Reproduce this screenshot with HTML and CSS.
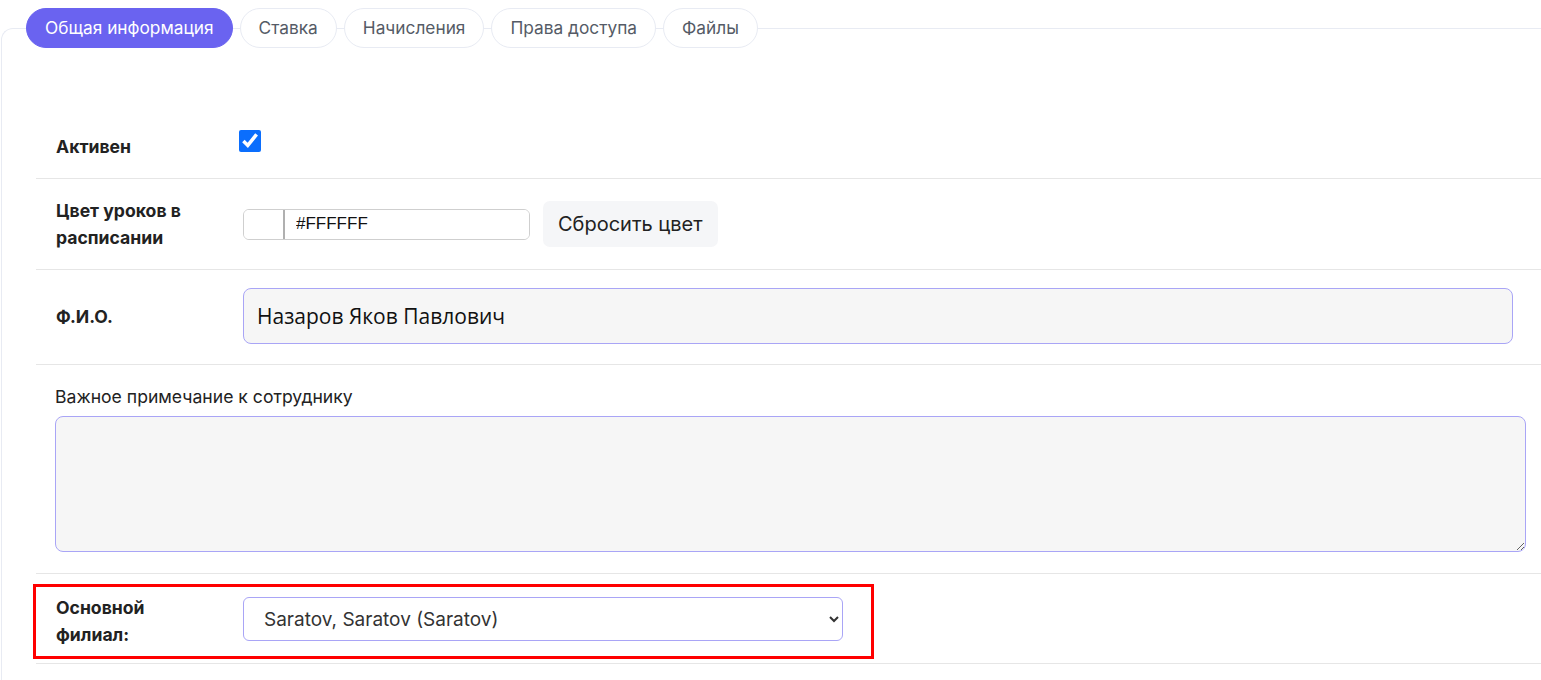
FILE: index.html
```html
<!DOCTYPE html>
<html lang="ru">
<head>
    <meta charset="UTF-8">
    <meta name="viewport" content="width=device-width, initial-scale=1.0">
    <title>Сотрудник - Общая информация</title>
    <link rel="stylesheet" href="styles.css">
</head>
<body>
    <div class="page">
        <div class="tabs">
            <a class="tab active" href="#">Общая информация</a>
            <a class="tab" href="#">Ставка</a>
            <a class="tab" href="#">Начисления</a>
            <a class="tab" href="#">Права доступа</a>
            <a class="tab" href="#">Файлы</a>
        </div>

        <div class="card">
            <div class="row row-active">
                <label class="label" for="active">Активен</label>
                <input type="checkbox" id="active" class="check" checked>
            </div>

            <div class="row row-color">
                <label class="label" for="color">Цвет уроков в расписании</label>
                <div class="color-group">
                    <span class="swatch"></span>
                    <input type="text" id="color" class="color-text" value="#FFFFFF">
                </div>
                <button class="btn-reset">Сбросить цвет</button>
            </div>

            <div class="row row-name">
                <label class="label" for="fio">Ф.И.О.</label>
                <input type="text" id="fio" class="field" value="Назаров Яков Павлович">
            </div>

            <div class="row row-note">
                <label class="note-label" for="note">Важное примечание к сотруднику</label>
                <textarea id="note" class="note"></textarea>
            </div>

            <div class="row row-branch">
                <div class="highlight">
                    <label class="label" for="branch">Основной филиал:</label>
                    <select id="branch" class="select">
                        <option>Saratov, Saratov (Saratov)</option>
                    </select>
                </div>
            </div>
        </div>
    </div>
</body>
</html>
```

FILE: styles.css
```css
body {
    font-family: Inter, "Noto Sans", sans-serif;
    background-color: #fff;
    color: #222;
    margin: 0;
    padding: 0;
    overflow: hidden;
}

.page {
    width: 1580px;
    padding-left: 1px;
}

.tabs {
    display: flex;
    gap: 7px;
    padding: 8px 0 0 25px;
    position: relative;
    z-index: 1;
}

.tab {
    display: block;
    height: 38px;
    line-height: 38px;
    padding: 0 18px;
    border: 1px solid #e8ebf3;
    border-radius: 20px;
    background-color: #fff;
    color: #555b66;
    font-size: 17.3px;
    text-decoration: none;
}

.tab.active {
    background-color: #6a63f0;
    border-color: #6a63f0;
    color: #fff;
}

.card {
    margin-top: -20px;
    padding: 79px 0 0 34px;
    border: 1px solid #e8ebf3;
    border-right: none;
    border-radius: 12px 0 0 0;
    min-height: 700px;
}

.row {
    display: flex;
    align-items: center;
    padding: 18px 0 18px 20px;
    border-bottom: 1px solid #e6e6e6;
}

.label {
    width: 187px;
    flex-shrink: 0;
    font-size: 17.6px;
    font-weight: 700;
    line-height: 27px;
    color: #222;
    padding-right: 40px;
    box-sizing: border-box;
}

.row-active {
    padding: 20px 0 20px 20px;
    align-items: flex-start;
}

.row-active .label {
    padding-top: 5px;
    margin-bottom: -2px;
}

.check {
    width: 22px;
    height: 22px;
    margin: 2px 0 0 -4px;
    accent-color: #0b6efd;
}

.color-group {
    display: flex;
    width: 287px;
    height: 31px;
    border: 1px solid #cfcfcf;
    border-radius: 6px;
    box-sizing: border-box;
    overflow: hidden;
}

.swatch {
    width: 39px;
    background-color: #fff;
    border-right: 2px solid #b0b0b0;
}

.color-text {
    flex: 1;
    border: none;
    outline: none;
    padding: 0 0 0 11px;
    font-family: "Liberation Sans", Arial, sans-serif;
    font-size: 17px;
    color: #111;
}

.btn-reset {
    margin-left: 13px;
    height: 46px;
    padding: 0 15px;
    border: none;
    border-radius: 7px;
    background-color: #f5f6f8;
    color: #222;
    font-family: Inter, sans-serif;
    font-size: 20px;
}

.row-name {
    padding: 18px 0 20px 20px;
}

.field {
    width: 1270px;
    height: 56px;
    box-sizing: border-box;
    padding: 0 13px;
    border: 1px solid #a9a5f6;
    border-radius: 8px;
    background-color: #f6f6f6;
    font-family: "Open Sans", sans-serif;
    font-size: 21px;
    color: #111;
}

.row-note {
    display: block;
    padding: 20px 0 21px 19px;
}

.note-label {
    display: block;
    font-size: 17.6px;
    line-height: 24px;
    color: #222;
    margin-bottom: 7px;
}

.note {
    display: block;
    width: 1471px;
    height: 136px;
    box-sizing: border-box;
    border: 1px solid #a9a5f6;
    border-radius: 8px;
    background-color: #f6f6f6;
    font-family: Inter, sans-serif;
}

.row-branch {
    padding: 10px 0 4px 0;
}

.highlight {
    display: flex;
    align-items: flex-start;
    margin-left: -3px;
    padding: 7px 28px 8px 20px;
    border: 3px solid #ff0000;
}

.select {
    width: 600px;
    height: 44px;
    margin-top: 3px;
    padding: 0 16px;
    border: 1px solid #a9a5f6;
    border-radius: 6px;
    background-color: #fff;
    font-family: Inter, sans-serif;
    font-size: 19px;
    color: #333;
}
```
